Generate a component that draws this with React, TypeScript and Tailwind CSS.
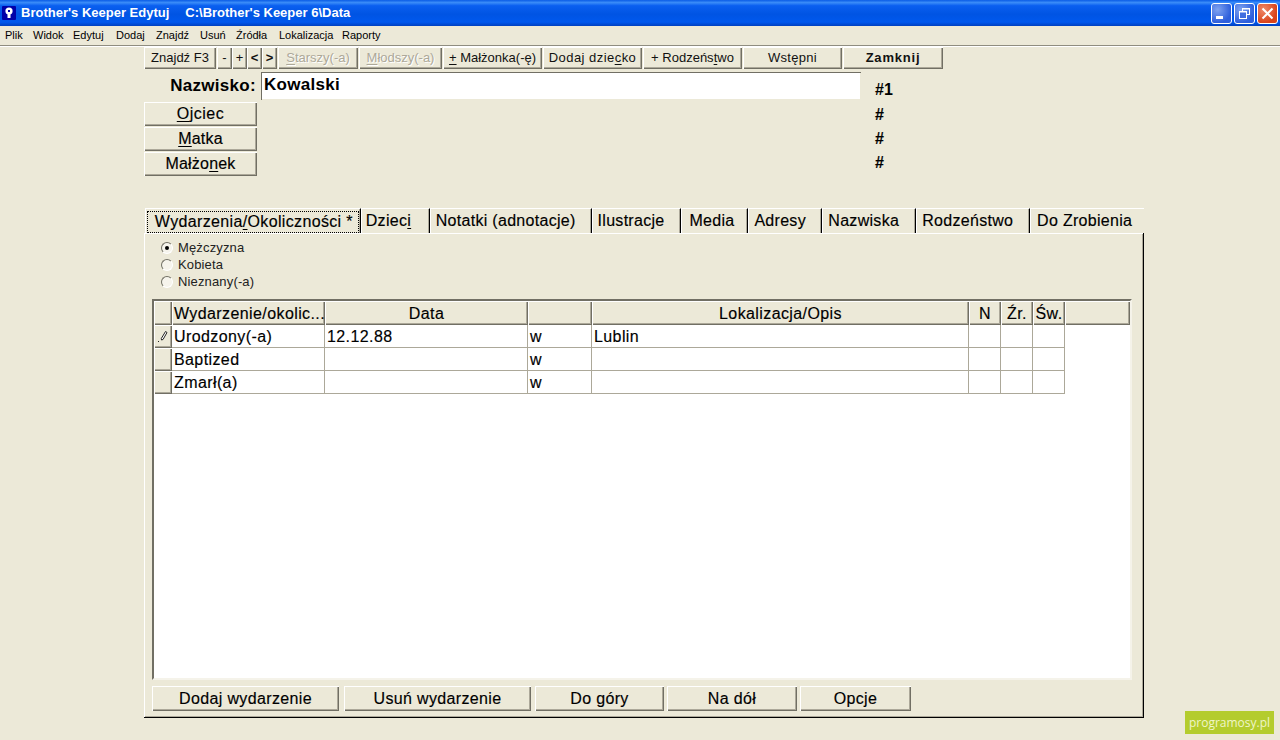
import React from "react";

const bevel = "bg-[#ece9d8] shadow-[inset_1px_1px_0_#ffffff,inset_-1px_-1px_0_#716f64,inset_-2px_-2px_0_#aca899]";
const ink = "[-webkit-text-stroke:0.15px_currentColor]";

function U({ children }: { children: React.ReactNode }) {
  return <span className="underline underline-offset-2">{children}</span>;
}

function Btn({ w, children, cls = "" }: { w: string; children: React.ReactNode; cls?: string }) {
  return <div className={`${w} ${bevel} flex items-center justify-center whitespace-nowrap ${cls}`}>{children}</div>;
}

const disabled = "text-[#aca899] [text-shadow:1px_1px_0_#ffffff]";

const menu = ["Plik", "Widok", "Edytuj", "Dodaj", "Znajdź", "Usuń", "Źródła", "Lokalizacja", "Raporty"];
const menuW = ["w-[28px]", "w-[40px]", "w-[43px]", "w-[40px]", "w-[44px]", "w-[36px]", "w-[43px]", "w-[63px]", "w-[50px]"];

const gridCols = "grid grid-cols-[18px_153px_203px_64px_377px_32px_32px_32px]";
const cell = `border-r border-b border-[#aca899] flex items-center pl-[2px] pt-[2px] text-[16px] tracking-[0.4px] leading-none h-[23px] bg-white ${ink}`;
const head = `bg-[#ece9d8] h-[24px] pt-[1px] flex items-center justify-center text-[16px] tracking-[0.4px] ${ink} shadow-[inset_1px_1px_0_#ffffff,inset_-1px_-1px_0_#716f64,inset_-2px_-2px_0_#aca899]`;

const rows = [
  ["Urodzony(-a)", "12.12.88", "w", "Lublin"],
  ["Baptized", "", "w", ""],
  ["Zmarł(a)", "", "w", ""],
];

const tabs: { label: React.ReactNode; w: string; pl: string }[] = [
  { label: <>Dziec<U>i</U></>, w: "w-[69px]", pl: "pl-[5px]" },
  { label: "Notatki (adnotacje)", w: "w-[162px]", pl: "pl-[6px]" },
  { label: "Ilustracje", w: "w-[90px]", pl: "pl-[6px]" },
  { label: "Media", w: "w-[67px]", pl: "pl-[8px]" },
  { label: "Adresy", w: "w-[74px]", pl: "pl-[6px]" },
  { label: "Nazwiska", w: "w-[94px]", pl: "pl-[6px]" },
  { label: "Rodzeństwo", w: "w-[114px]", pl: "pl-[6px]" },
  { label: "Do Zrobienia", w: "w-[114px]", pl: "pl-[7px]" },
];

function Radio({ on, label }: { on?: boolean; label: string }) {
  return (
    <div className="h-[17px] flex items-center text-[13px] tracking-[0.15px] text-[#222]">
      <div className="w-[12px] h-[12px] rounded-full bg-[#f6f4ec] border border-t-[#716f64] border-l-[#716f64] border-r-white border-b-white flex items-center justify-center mr-[5px]">
        {on && <div className="w-[4px] h-[4px] rounded-full bg-black" />}
      </div>
      {label}
    </div>
  );
}

function WinBtn({ children, red }: { children: React.ReactNode; red?: boolean }) {
  return (
    <div className={`w-[21px] h-[21px] rounded-[3px] border border-white flex items-center justify-center ${red ? "bg-[radial-gradient(circle_at_30%_30%,#ef8a6a,#d9431a_70%)]" : "bg-[radial-gradient(circle_at_30%_30%,#7fa3f0,#2e5fdc_70%)]"}`}>
      {children}
    </div>
  );
}

export default function App() {
  return (
    <div className="relative w-[1280px] h-[740px] overflow-hidden bg-[#ece9d8] text-black font-['Liberation_Sans',Arial,sans-serif]">
      {/* Title bar */}
      <div className="h-[26px] flex items-center bg-[linear-gradient(180deg,#0a5ce6_0%,#3a8cf8_10%,#0a5ff0_22%,#0054e3_55%,#0058ee_85%,#0040c0_100%)]">
        <svg width="16" height="16" viewBox="0 0 16 16" className="ml-[1px] mt-[-1px] shrink-0">
          <rect x="1" y="1" width="14" height="14" rx="1" fill="#0000a8" />
          <circle cx="8" cy="6" r="3.6" fill="#ffffff" />
          <rect x="6.5" y="8" width="3" height="5" fill="#ffffff" />
          <rect x="7" y="5" width="2" height="2" fill="#0000a8" />
        </svg>
        <span className="ml-[4px] text-white font-bold text-[13px] whitespace-pre">{"Brother's Keeper Edytuj"}</span>
        <span className="ml-[16px] text-white font-bold text-[13px] whitespace-pre">{"C:\\Brother's Keeper 6\\Data"}</span>
        <div className="ml-auto mr-[2px] flex gap-[2px]">
          <WinBtn>
            <div className="w-[7px] h-[3px] bg-white mt-[8px] -ml-[4px]" />
          </WinBtn>
          <WinBtn>
            <svg width="13" height="13" viewBox="0 0 13 13" fill="none" stroke="#fff">
              <rect x="4.5" y="1.5" width="7" height="6" />
              <rect x="1.5" y="4.5" width="7" height="7" fill="#3f6de0" />
              <path d="M1 5h8M4 2h8" strokeWidth="1" />
            </svg>
          </WinBtn>
          <WinBtn red>
            <svg width="13" height="13" viewBox="0 0 13 13" stroke="#fff" strokeWidth="2">
              <path d="M1.5 1.5l10 10M11.5 1.5l-10 10" />
            </svg>
          </WinBtn>
        </div>
      </div>

      {/* Menu bar */}
      <div className="h-[20px] pl-[5px] flex items-center text-[11px] border-b border-b-[#8f8d80] shadow-[0_1px_0_#ffffff]">
        {menu.map((m, i) => (
          <div key={m} className={`${menuW[i]} whitespace-nowrap`}>{m}</div>
        ))}
      </div>

      <div className="ml-[144px] w-[1000px]">
        {/* Toolbar */}
        <div className="mt-[1px] h-[22px] flex text-[13px] text-[#111]">
          <Btn w="w-[72px]">Znajdź F3</Btn>
          <div className="w-[1px]" />
          <Btn w="w-[15px]">-</Btn>
          <Btn w="w-[15px]">+</Btn>
          <Btn w="w-[15px]" cls="font-bold">{"<"}</Btn>
          <Btn w="w-[15px]" cls="font-bold">{">"}</Btn>
          <div className="w-[1px]" />
          <Btn w="w-[80px]" cls={disabled}><U>S</U>tarszy(-a)</Btn>
          <div className="w-[1px]" />
          <Btn w="w-[83px]" cls={disabled}><U>M</U>łodszy(-a)</Btn>
          <div className="w-[1px]" />
          <Btn w="w-[99px]"><U>+</U>&nbsp;Małżonka(-ę)</Btn>
          <div className="w-[1px]" />
          <Btn w="w-[99px]" cls="tracking-[0.45px]">Dodaj dzie<U>c</U>ko</Btn>
          <div className="w-[1px]" />
          <Btn w="w-[99px]">+ Rodzeńs<U>t</U>wo</Btn>
          <div className="w-[1px]" />
          <Btn w="w-[99px]" cls="tracking-[0.3px]">Wstępni</Btn>
          <div className="w-[1px]" />
          <Btn w="w-[100px]" cls="font-bold tracking-[0.8px]">Zamknij</Btn>
        </div>

        {/* Name row */}
        <div className="mt-[2px] h-[29px] flex items-center">
          <div className="w-[113px] text-right font-bold text-[17px] tracking-[0.3px] pr-[1px]">Nazwisko:</div>
          <div className="ml-[4px] w-[600px] h-[28px] bg-white flex items-center pl-[3px] pb-[1px] font-bold text-[17px] tracking-[0.3px] shadow-[inset_1px_1px_0_#716f64,inset_-1px_-1px_0_#ece9d8]">Kowalski</div>
          <div className="ml-[14px] font-bold text-[16px] pt-[8px]">#1</div>
        </div>

        {/* Parents */}
        <div className={`mt-[2px] flex flex-col gap-[1px] text-[16px] ${ink}`}>
          <div className="flex h-[24px]">
            <Btn w="w-[113px]" cls="tracking-[0.5px]"><U>O</U>jciec</Btn>
            <div className="ml-[618px] font-bold text-[16px] leading-[26px]">#</div>
          </div>
          <div className="flex h-[24px]">
            <Btn w="w-[113px]" cls="tracking-[0.2px]"><U>M</U>atka</Btn>
            <div className="ml-[618px] font-bold text-[16px] leading-[24px]">#</div>
          </div>
          <div className="flex h-[24px]">
            <Btn w="w-[113px]" cls="tracking-[0.2px]">Małżo<U>n</U>ek</Btn>
            <div className="ml-[618px] font-bold text-[16px] leading-[22px]">#</div>
          </div>
        </div>

        {/* Tabs */}
        <div className={`mt-[32px] h-[25px] flex text-[16px] ml-[1px] ${ink}`}>
          <div className="w-[216px] h-[25px] flex items-center justify-center border-t border-l border-white border-r border-r-black shadow-[inset_-1px_0_0_#aca899]">
            <div className="w-[212px] h-[22px] mt-[1px] pl-[2px] flex items-center justify-center border border-dotted border-black tracking-[0.35px] whitespace-nowrap">
              Wydarzenia<U>/</U>Okoliczności *
            </div>
          </div>
          {tabs.map((t, i) => (
            <div key={i} className={`${t.w} ${t.pl} h-[25px] flex items-center whitespace-nowrap tracking-[0.3px] border-t border-t-white ${i < tabs.length - 1 ? "border-r border-r-black shadow-[inset_1px_0_0_#ffffff,inset_-1px_0_0_#aca899]" : "shadow-[inset_1px_0_0_#ffffff]"}`}>
              {t.label}
            </div>
          ))}
        </div>

        {/* Panel */}
        <div className="relative h-[485px] border-r border-b border-r-black border-b-black shadow-[inset_1px_1px_0_#ffffff,inset_-1px_-1px_0_#aca899] pl-[8px]">
          <div className="pt-[6px] pl-[9px]">
            <Radio on label="Mężczyzna" />
            <Radio label="Kobieta" />
            <Radio label="Nieznany(-a)" />
          </div>

          {/* Grid */}
          <div className="mt-[9px] w-[980px] h-[381px] bg-white border-t-2 border-l-2 border-t-[#716f64] border-l-[#716f64] border-r-2 border-b-2 border-r-[#f5f3ea] border-b-[#f5f3ea]">
            <div className="flex">
              <div className={gridCols}>
                <div className={head} />
                <div className={`${head} !justify-start pl-[2px] whitespace-nowrap`}>Wydarzenie/okolic...</div>
                <div className={head}>Data</div>
                <div className={head} />
                <div className={head}>Lokalizacja/Opis</div>
                <div className={head}>N</div>
                <div className={head}>Źr.</div>
                <div className={head}>Św.</div>
              </div>
              <div className={`${head} flex-1`} />
            </div>
            <div className="flex flex-col">
              {rows.map((r, i) => (
                <div key={i} className={gridCols}>
                  <div className={`${bevel} h-[23px] flex items-center justify-center`}>
                    {i === 0 && (
                      <svg width="12" height="14" viewBox="0 0 12 14" fill="none" stroke="#222">
                        <path d="M8.500 1.500l1.500 1-4 7-1.500.5-.2-1.500z" fill="#fff" />
                        <path d="M1 11.500h2" strokeDasharray="1 1" />
                      </svg>
                    )}
                  </div>
                  <div className={cell}>{r[0]}</div>
                  <div className={cell}>{r[1]}</div>
                  <div className={cell}>{r[2]}</div>
                  <div className={cell}>{r[3]}</div>
                  <div className={cell} />
                  <div className={cell} />
                  <div className={cell} />
                </div>
              ))}
            </div>
          </div>

          {/* Bottom buttons */}
          <div className={`mt-[6px] flex text-[16px] tracking-[0.35px] ${ink}`}>
            <Btn w="w-[187px] h-[25px]">Dodaj wydarzenie</Btn>
            <Btn w="ml-[5px] w-[187px] h-[25px]">Usuń wydarzenie</Btn>
            <Btn w="ml-[4px] w-[129px] h-[25px]">Do góry</Btn>
            <Btn w="ml-[3px] w-[130px] h-[25px]">Na dół</Btn>
            <Btn w="ml-[3px] w-[111px] h-[25px]">Opcje</Btn>
          </div>
        </div>
      </div>

      {/* Watermark */}
      <div className="absolute left-[1185px] top-[711px] w-[89px] h-[23px] bg-[#b4cc2e] text-[#f0f5c8] text-[12px] flex items-center justify-center font-['Open_Sans',sans-serif]">
        programosy.pl
      </div>
    </div>
  );
}
